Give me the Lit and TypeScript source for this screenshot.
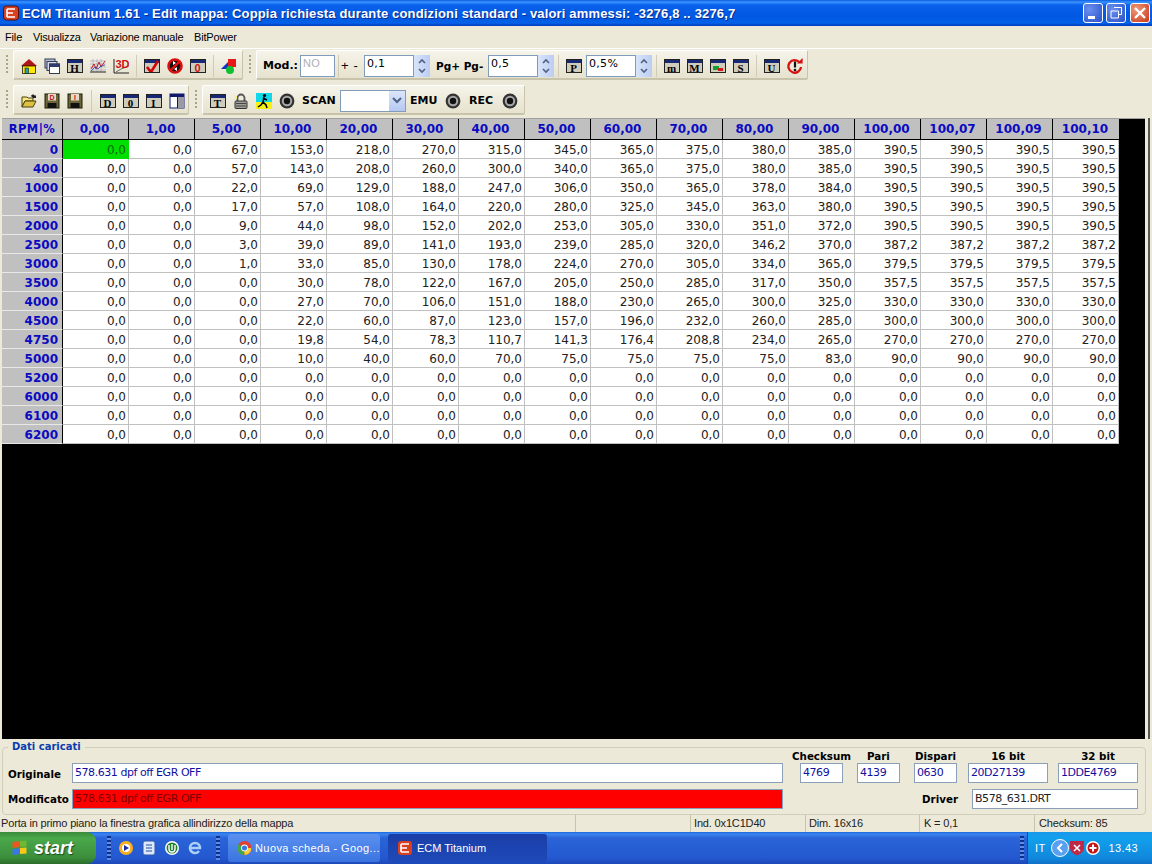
import { LitElement, html, css, svg } from "lit";
import { customElement } from "lit/decorators.js";

const Z = "0,0";
const rows: [string, string[]][] = [
  ["0", "67,0 153,0 218,0 270,0 315,0 345,0 365,0 375,0 380,0 385,0 390,5 390,5 390,5 390,5"],
  ["400", "57,0 143,0 208,0 260,0 300,0 340,0 365,0 375,0 380,0 385,0 390,5 390,5 390,5 390,5"],
  ["1000", "22,0 69,0 129,0 188,0 247,0 306,0 350,0 365,0 378,0 384,0 390,5 390,5 390,5 390,5"],
  ["1500", "17,0 57,0 108,0 164,0 220,0 280,0 325,0 345,0 363,0 380,0 390,5 390,5 390,5 390,5"],
  ["2000", "9,0 44,0 98,0 152,0 202,0 253,0 305,0 330,0 351,0 372,0 390,5 390,5 390,5 390,5"],
  ["2500", "3,0 39,0 89,0 141,0 193,0 239,0 285,0 320,0 346,2 370,0 387,2 387,2 387,2 387,2"],
  ["3000", "1,0 33,0 85,0 130,0 178,0 224,0 270,0 305,0 334,0 365,0 379,5 379,5 379,5 379,5"],
  ["3500", "0,0 30,0 78,0 122,0 167,0 205,0 250,0 285,0 317,0 350,0 357,5 357,5 357,5 357,5"],
  ["4000", "0,0 27,0 70,0 106,0 151,0 188,0 230,0 265,0 300,0 325,0 330,0 330,0 330,0 330,0"],
  ["4500", "0,0 22,0 60,0 87,0 123,0 157,0 196,0 232,0 260,0 285,0 300,0 300,0 300,0 300,0"],
  ["4750", "0,0 19,8 54,0 78,3 110,7 141,3 176,4 208,8 234,0 265,0 270,0 270,0 270,0 270,0"],
  ["5000", "0,0 10,0 40,0 60,0 70,0 75,0 75,0 75,0 75,0 83,0 90,0 90,0 90,0 90,0"],
  ["5200", ""], ["6000", ""], ["6100", ""], ["6200", ""],
].map(([k, v]) => [k, [Z, Z, ...(v ? v.split(" ") : Array(14).fill(Z))]] as [string, string[]]);

const cols = ["0,00","1,00","5,00","10,00","20,00","30,00","40,00","50,00","60,00","70,00","80,00","90,00","100,00","100,07","100,09","100,10"];

const ic = (c: unknown) => html`<svg class="ic" viewBox="0 0 16 16" width="16" height="16">${c}</svg>`;
const home = ic(svg`<path d="M0 8 8 1l8 7z" fill="#b01818"/><rect x="1.5" y="8" width="13" height="7.5" fill="#ffe800" stroke="#000" stroke-width=".7"/><rect x="4" y="10" width="3.5" height="5.5" fill="#18a0c0" stroke="#000" stroke-width=".5"/>`);
const wins = ic(svg`<g fill="#fff" stroke="#333b55"><rect x="1" y="1" width="10" height="9" fill="#b8c0d8"/><rect x="3" y="3.5" width="10" height="9" fill="#d8dce8"/><rect x="5.5" y="6" width="10" height="9.5"/><rect x="5.500" y="6" width="10" height="2.5" fill="#2a3a80"/></g>`);
const chart = ic(svg`<path d="M0 3h16M0 6h16M0 9h16M0 12h16M3 1v13M7 1v13M11 1v13" stroke="#9a9ab8" stroke-width=".6"/><path d="M0 14h16" stroke="#222"/><path d="m1 11 3-5 2 5 3-7 2 5 4-6" stroke="#c02020" fill="none"/><path d="m1 13 4-4 3 2 3-3 4-1" stroke="#2030c0" fill="none" stroke-width=".7"/>`);
const three = ic(svg`<path d="M1 1v14h15" stroke="#222" fill="none"/><path d="m3 14 5-3 8-3" stroke="#333" fill="none" stroke-width=".7"/><text x="2.5" y="10" font-family="Liberation Sans" font-weight="700" font-size="11" fill="#d01010">3D</text>`);
const check = html`<span class="win"><i></i><b></b><svg class="over" viewBox="0 0 16 16" width="16" height="16"><path d="m3 8 4 5 7-11" stroke="#d80000" stroke-width="2.6" fill="none"/></svg></span>`;
const noIc = ic(svg`<circle cx="8" cy="8" r="6.500" fill="#111" stroke="#d81010" stroke-width="2.600"/><path d="m6 3 3 2-3 2zM10 13l-3-2 3-2z" fill="#fff"/><path d="M3 13 13 3" stroke="#e81010" stroke-width="2.400"/>`);
const shapes = ic(svg`<rect x="7" y="1" width="8" height="8" fill="#e81818"/><path d="M0 11 7 4v7z" fill="#1030c8"/><circle cx="9" cy="12" r="4" fill="#10c030"/>`);
const folder = ic(svg`<path d="M1 4h5l1 1h5v3H4L1 14z" fill="#f8e880" stroke="#4a4010"/><path d="M4 8h11l-3 6H1z" fill="#e0c040" stroke="#4a4010"/><path d="M10 3c1-2 3-2 4 0l1-1v3h-3z" fill="#222"/>`);
const save = (l: string) => ic(svg`<rect x="1" y="1" width="14" height="14" fill="#6a6638" stroke="#1c1a08"/><rect x="4" y="1" width="8" height="6.5" fill="#e8d8c8"/><rect x="3.5" y="10" width="9" height="5" fill="#111"/><text x="8" y="7" text-anchor="middle" font-family="Liberation Sans" font-weight="700" font-size="7" fill="#c01818">${l}</text>`);
const panel = ic(svg`<rect x="1" y="1" width="14" height="14" fill="#fff" stroke="#101870"/><rect x="1" y="1" width="14" height="3" fill="#101870"/><rect x="9" y="4" width="6" height="11" fill="#9a9aa4"/><path d="M8.500 4v11" stroke="#101870"/>`);
const lock = ic(svg`<path d="M4.500 8V5a3.500 3.500 0 0 1 7 0v3" fill="none" stroke="#555" stroke-width="1.800"/><path d="M2 3h2v3H2z" fill="#f4f080"/><rect x="2" y="8" width="12" height="7.500" rx="1" fill="#a0a098" stroke="#333"/><path d="M3 10.500h10M3 13h10" stroke="#444"/>`);
const run = ic(svg`<rect width="16" height="9" fill="#10d8e8"/><rect y="9" width="16" height="7" fill="#f8f010"/><circle cx="8.500" cy="2.500" r="1.600"/><path d="m8 4-1 5 3 3 1 3M7 9l-2 3-3 2M7 5l4 2" stroke="#000" stroke-width="1.500" fill="none"/>`);
const disc = ic(svg`<circle cx="8" cy="8" r="7.400" fill="#333"/><circle cx="8" cy="8" r="5.200" fill="#a8a8a8"/><circle cx="8" cy="8" r="3.200" fill="#111"/>`);
const colorWin = html`<span class="win"><i></i><b></b><svg class="over" viewBox="0 0 16 16" width="16" height="16"><rect x="3" y="7" width="6" height="4" fill="#10a030"/><rect x="8" y="9" width="5" height="3" fill="#d81818"/></svg></span>`;
const redo = ic(svg`<path d="M12.600 4.400A6.300 6.300 0 1 0 14 9" fill="none" stroke="#d81010" stroke-width="2.300"/><path d="M10 5.500h5.600V0z" fill="#d81010"/><path d="M8 3.500v6" stroke="#111" stroke-width="2.200"/><circle cx="8" cy="12" r="1.300" fill="#111"/>`);
const win = (l: string, red = false) => html`<span class="win"><i></i><b class=${red ? "red" : ""}>${l}</b></span>`;
const slot = (c: unknown) => html`<span class="slot">${c}</span>`;
const spin = html`<span class="spin"><svg viewBox="0 0 16 22" width="16" height="22"><path d="m5 8 3-3 3 3" fill="none" stroke="#4d6185" stroke-width="1.600"/><path d="m5 14 3 3 3-3" fill="none" stroke="#4d6185" stroke-width="1.600"/></svg></span>`;
const flag = svg`<g transform="skewY(-6)"><rect x="1" y="3" width="6.500" height="6" fill="#e85820"/><rect x="8.500" y="3" width="6.500" height="6" fill="#70b830"/><rect x="1" y="10" width="6.500" height="6" fill="#3878e0"/><rect x="8.500" y="10" width="6.500" height="6" fill="#f8c818"/></g>`;
const chrome = svg`<circle cx="8" cy="8" r="7.500" fill="#e04030"/><path d="M8 8 1.500 4A7.500 7.500 0 0 0 8 15.500z" fill="#40a848"/><path d="M8 8h7.300A7.500 7.500 0 0 1 8 15.500z" fill="#f8d030"/><circle cx="8" cy="8" r="3.600" fill="#fff"/><circle cx="8" cy="8" r="2.700" fill="#3878e0"/>`;

@customElement("app-root")
export class AppRoot extends LitElement {
  static styles = css`
    :host { display: flex; flex-direction: column; width: 1152px; height: 864px; overflow: hidden; background: #ece9d8; font-family: "Liberation Sans", sans-serif; font-size: 11px; color: #000; }
    .title { height: 26px; flex: none; display: flex; align-items: center; padding: 0 2px 0 3px; background: linear-gradient(#0a5ae0 0, #3a93ff 2px, #0a62ec 5px, #0058e2 17px, #0462e8 23px, #003cc0 26px); color: #fff; box-sizing: border-box; }
    .title .logo { flex: none; margin-right: 3px; }
    .title .txt { flex: 1; font: 700 13px "Liberation Sans", sans-serif; letter-spacing: .16px; white-space: nowrap; text-shadow: 1px 1px #0a2a90; }
    .wb { width: 20px; height: 20px; margin-left: 3px; border: 1px solid #fff; border-radius: 3px; box-sizing: border-box; background: radial-gradient(circle at 30% 30%, #6a90f0, #2a50c8); display: flex; }
    .wb svg { display: block; }
    .wb.close { background: radial-gradient(circle at 30% 30%, #f09878, #c83818); margin-left: 4px; }
    .menu { height: 22px; flex: none; display: flex; align-items: center; padding-left: 5px; gap: 12px; font-size: 11px; letter-spacing: -.16px; white-space: nowrap; }
    .menu span:nth-child(1) { width: 16px; }
    .menu span:nth-child(2) { width: 45px; }
    .menu span:nth-child(3) { width: 92px; }
    .tools { height: 70px; flex: none; display: flex; flex-direction: column; gap: 5px; padding-top: 1px; box-sizing: border-box; border-top: 1px solid #fff; }
    .tr { display: flex; height: 30px; }
    .grip { width: 13px; flex: none; display: flex; justify-content: center; }
    .grip::before { content: ""; width: 2px; margin: 5px 0; background: repeating-linear-gradient(#a8a48c 0 2px, transparent 2px 4px); }
    .band { display: flex; align-items: center; box-sizing: border-box; height: 30px; padding-top: 2px; border: 1px solid #fff; border-right-color: #c8c4ac; border-bottom: 2px solid #c8c4ac; background: linear-gradient(#f6f4ea, #e6e2ce); border-radius: 2px; }
    .pl4 { padding-left: 3px; }
    .pl7 { padding-left: 6px; padding-right: 1px; }
    .pr2 { padding-right: 2px; }
    .pr3 { padding-right: 3px; }
    .slot { width: 23px; flex: none; display: flex; justify-content: center; }
    .ic { display: block; }
    .sep { flex: none; width: 8px; height: 22px; display: flex; justify-content: center; }
    .sep::before { content: ""; width: 1px; background: #cfcbb6; }
    .sep.w10 { width: 10px; }
    .sep.w6 { width: 6px; }
    .win { position: relative; display: block; width: 16px; height: 14px; border: 1px solid #222; box-sizing: border-box; background: #cfccbc; overflow: hidden; }
    .win i { display: block; height: 3px; background: #182878; }
    .win b { display: block; font: 700 11px/10px "Liberation Serif", serif; text-align: center; color: #000; }
    .win b.red { color: #d01010; font-family: "Liberation Sans", sans-serif; }
    .over { position: absolute; left: -1px; top: -1px; }
    .lb { flex: none; font: 700 11px "DejaVu Sans", sans-serif; white-space: nowrap; }
    .lb.mod { width: 37px; }
    .lb.pm { width: 23px; font-weight: 400; font-family: "Liberation Sans", sans-serif; font-size: 13px; letter-spacing: .6px; }
    .lb.pg { width: 52px; margin-left: 6px; font-size: 10.5px; }
    .lb.scan { width: 38px; margin-left: 4px; }
    .lb.emu { width: 31px; margin-left: 4px; }
    .lb.rec { width: 29px; margin-left: 5px; }
    .in { flex: none; box-sizing: border-box; height: 22px; width: 50px; background: #fff; border: 1px solid #7f9db9; padding: 0 2px 5px; display: flex; align-items: center; font: 11px "DejaVu Sans", sans-serif; letter-spacing: .3px; }
    .in.no { width: 35px; color: #b0b0b0; font-family: "Liberation Sans", sans-serif; }
    .in.pc { margin-left: 1px; }
    .spin { flex: none; width: 16px; height: 22px; background: linear-gradient(90deg, #d8e4fa, #bccdf2); }
    .spin svg { display: block; }
    .select { flex: none; width: 66px; height: 22px; box-sizing: border-box; border: 1px solid #7f9db9; background: #fff; display: flex; justify-content: flex-end; }
    .select span { width: 16px; background: linear-gradient(#dbe6fb, #b5c8f2); display: flex; align-items: center; justify-content: center; }
    .main { height: 621px; flex: none; display: flex; }
    .canvas { width: 1143px; margin-left: 2px; background: #000; border-top: 1px solid #a0a0a0; }
    .gutter { flex: 1; display: flex; justify-content: center; }
    .gutter::before { content: ""; width: 2px; background: #555; }
    .grid { display: grid; grid-template-columns: 61px repeat(16, 66px); grid-template-rows: 21px repeat(16, 19px); width: 1117px; font: 12px "DejaVu Sans", sans-serif; }
    .h { background: #c0c0c0; color: #0a0ac0; font-weight: 700; text-align: center; font-size: 12px; line-height: 19px; border-right: 1px solid #000; border-bottom: 1px solid #000; box-sizing: border-box; padding: 1px 2px 0 0; }
    .h:nth-child(17) { border-right: 0; }
    .h.corner { letter-spacing: .4px; font-size: 11.5px; padding-right: 0; }
    .r { background: #c0c0c0; color: #0a0ac0; font-weight: 700; text-align: right; padding: 1px 4px 0 0; box-sizing: border-box; line-height: 19px; overflow: hidden; border-right: 1px solid #000; border-bottom: 1px solid #e8e8e8; }
    .c { background: #fff; color: #222; text-align: right; padding: 1px 2px 0 0; box-sizing: border-box; line-height: 19px; overflow: hidden; border-right: 1px solid #c0c0c0; border-bottom: 1px solid #c0c0c0; font-size: 12px; }
    .c.on { background: #00e000; border-color: #00e000; color: #0a6a0a; }
    fieldset { margin: 0 6px 0 2px; padding: 0 0 0 5px; border: 1px solid #d0cdb8; border-radius: 4px; height: 76px; box-sizing: border-box; min-width: 0; }
    legend { margin-left: 0; padding: 0 4px; color: #0a3cb0; font: 700 10px/16px "DejaVu Sans", sans-serif; }
    .data { display: grid; margin-top: -6px; grid-template-columns: 64px 711px 17px 43px 14px 43px 14px 43px 11px 80px 10px 80px; grid-template-rows: 14px 20px 6px 20px; align-items: center; }
    .dl { font: 700 10.300px "DejaVu Sans", sans-serif; white-space: nowrap; }
    .dl.t2 { padding-top: 1px; }
    .top { justify-self: center; grid-row: 1; }
    .t2 { grid-row: 2; }
    .t4 { grid-row: 4; }
    .box { box-sizing: border-box; height: 20px; background: #fff; border: 1px solid #8aa0b8; padding: 0 2px 2px; display: flex; align-items: center; color: #1010a0; font: 11px "DejaVu Sans", sans-serif; letter-spacing: -.45px; white-space: nowrap; }
    .box.red { background: #ff0000; color: #800000; }
    .box.w { color: #222; }
    .c2 { grid-column: 2; } .c4 { grid-column: 4; } .c6 { grid-column: 6; } .c8 { grid-column: 8; } .c10 { grid-column: 10; } .c12 { grid-column: 12; }
    .drv { grid-column: 4 / 13; display: flex; justify-content: flex-end; align-items: center; gap: 14px; }
    .drv .box { width: 166px; }
    .status { height: 17px; flex: none; display: flex; font-size: 11px; line-height: 17px; letter-spacing: -.16px; color: #222; white-space: nowrap; }
    .status span { box-sizing: border-box; padding-left: 1px; border-right: 1px solid #c8c4ac; height: 17px; }
    .status span:nth-child(1) { width: 576px; }
    .status span:nth-child(2) { width: 115px; }
    .status span:nth-child(3) { width: 115px; padding-left: 3px; }
    .status span:nth-child(4) { width: 114px; padding-left: 3px; }
    .status span:nth-child(5) { width: 115px; padding-left: 4px; }
    .status span:nth-child(6) { border: 0; padding-left: 4px; }
    .task { height: 32px; flex: none; display: flex; align-items: center; background: linear-gradient(#1c66e0 0, #3c86f0 2px, #2a64d8 6px, #2458d0 26px, #1c48b8 32px); color: #fff; font-size: 11px; letter-spacing: .4px; }
    .start { width: 96px; height: 32px; flex: none; box-sizing: border-box; display: flex; align-items: center; gap: 6px; padding-left: 11px; border-radius: 0 9px 9px 0; background: linear-gradient(#3a8a3c, #4aa84a 20%, #3c8e3c 80%, #2c6c2c); font: italic 700 18px "Liberation Sans", sans-serif; letter-spacing: 0; text-shadow: 1px 1px 1px #1c4c1c; }
    .dots { width: 4px; height: 24px; flex: none; background: repeating-linear-gradient(#0e2f8c 0 2px, #5c8ce8 2px 4px); }
    .d1 { margin-left: 11px; }
    .d2 { margin-left: 13px; }
    .ql { display: flex; align-items: center; gap: 7px; margin-left: 7px; }
    .ql svg { display: block; }
    .tb { box-sizing: border-box; height: 28px; flex: none; display: flex; align-items: center; gap: 3px; padding-left: 9px; border-radius: 3px; white-space: nowrap; }
    .tb.a { width: 152px; margin-left: 8px; background: linear-gradient(#5a90f0, #3c74e0); }
    .tb.b { width: 159px; margin-left: 8px; gap: 4px; background: linear-gradient(#1a3ea8, #1e4ab8); letter-spacing: 0; }
    .tray { margin-left: auto; width: 125px; height: 32px; box-sizing: border-box; display: flex; align-items: center; background: linear-gradient(#1898e8, #12a0ec 6px, #1088dc 26px, #1070c8); border-left: 1px solid #0a4ea8; }
    .tray svg { display: block; }
    .tray .it { margin: 0 5px 0 2px; width: 11px; }
    .tray .ti { margin-left: auto; margin-right: 14px; }
    .lead { margin-left: -8px; margin-right: 9px; }
  `;

  render() {
    return html`
      <div class="title">
        <svg class="logo" viewBox="0 0 16 16" width="16" height="16"><rect x=".5" y="1" width="15" height="14" rx="3" fill="#d84020" stroke="#5a1008"/><path d="M4 4h8M4 8h6M4 12h8M4 4v8" stroke="#fff" stroke-width="1.600" fill="none"/></svg>
        <span class="txt">ECM Titanium 1.61 - Edit mappa: Coppia richiesta durante condizioni standard - valori ammessi: -3276,8 .. 3276,7</span>
        <span class="wb"><svg viewBox="0 0 18 18" width="18" height="18"><rect x="4" y="12" width="7" height="3" fill="#fff"/></svg></span>
        <span class="wb"><svg viewBox="0 0 18 18" width="18" height="18"><path d="M7 3.500h7.500v7H12M4 7h7.500v7H4z" fill="none" stroke="#fff"/></svg></span>
        <span class="wb close"><svg viewBox="0 0 18 18" width="18" height="18"><path d="m4 4 10 10M14 4 4 14" stroke="#fff" stroke-width="2.400"/></svg></span>
      </div>
      <div class="menu"><span>File</span><span>Visualizza</span><span>Variazione manuale</span><span>BitPower</span></div>
      <div class="tools">
        <div class="tr">
          <span class="grip"></span>
          <div class="band pl4 pr2">
            ${slot(home)}${slot(wins)}${slot(win("H"))}${slot(chart)}${slot(three)}<span class="sep"></span>
            ${slot(check)}${slot(noIc)}${slot(win("0", true))}<span class="sep"></span>${slot(shapes)}
          </div>
          <span class="grip"></span>
          <div class="band pl7">
            <span class="lb mod">Mod.:</span><span class="in no">NO</span><span class="sep w6"></span>
            <span class="lb pm">+ -</span><span class="in">0,1</span>${spin}
            <span class="lb pg">Pg+ Pg-</span><span class="in">0,5</span>${spin}<span class="sep"></span>
            ${slot(win("P"))}<span class="in pc">0,5%</span>${spin}<span class="sep"></span>
            ${slot(win("m"))}${slot(win("M"))}${slot(colorWin)}${slot(win("S"))}<span class="sep"></span>
            ${slot(win("U"))}${slot(redo)}
          </div>
        </div>
        <div class="tr">
          <span class="grip"></span>
          <div class="band pl4">
            ${slot(folder)}${slot(save("D"))}${slot(save("I"))}<span class="sep w10"></span>
            ${slot(win("D"))}${slot(win("0"))}${slot(win("I"))}${slot(panel)}
          </div>
          <span class="grip"></span>
          <div class="band pl4 pr3">
            ${slot(win("T"))}${slot(lock)}${slot(run)}${slot(disc)}
            <span class="lb scan">SCAN</span>
            <span class="select"><span><svg viewBox="0 0 10 8" width="10" height="8"><path d="m1 1 4 4 4-4" fill="none" stroke="#4d6185" stroke-width="2"/></svg></span></span>
            <span class="lb emu">EMU</span>${slot(disc)}
            <span class="lb rec">REC</span>${slot(disc)}
          </div>
        </div>
      </div>
      <div class="main">
        <div class="canvas">
          <div class="grid">
            <div class="h corner">RPM|%</div>
            ${cols.map((c) => html`<div class="h">${c}</div>`)}
            ${rows.map(([k, vals], i) => html`<div class="r">${k}</div>${vals.map((v, j) => html`<div class="c ${i === 0 && j === 0 ? "on" : ""}">${v}</div>`)}`)}
          </div>
        </div>
        <div class="gutter"></div>
      </div>
      <fieldset>
        <legend>Dati caricati</legend>
        <div class="data">
          <span class="dl top c4">Checksum</span><span class="dl top c6">Pari</span><span class="dl top c8">Dispari</span><span class="dl top c10">16 bit</span><span class="dl top c12">32 bit</span>
          <span class="dl t2">Originale</span><span class="box t2 c2">578.631 dpf off EGR OFF</span>
          <span class="box t2 c4">4769</span><span class="box t2 c6">4139</span><span class="box t2 c8">0630</span><span class="box t2 c10">20D27139</span><span class="box t2 c12">1DDE4769</span>
          <span class="dl t4">Modificato</span><span class="box red t4 c2">578.631 dpf off EGR OFF</span>
          <div class="drv t4"><span class="dl">Driver</span><span class="box w">B578_631.DRT</span></div>
        </div>
      </fieldset>
      <div class="status"><span>Porta in primo piano la finestra grafica allindirizzo della mappa</span><span></span><span>Ind. 0x1C1D40</span><span>Dim. 16x16</span><span>K = 0,1</span><span>Checksum: 85</span></div>
      <div class="task">
        <div class="start"><svg viewBox="0 0 16 18" width="17" height="18">${flag}</svg>start</div>
        <span class="dots d1"></span>
        <div class="ql">
          <svg viewBox="0 0 16 16" width="16" height="16"><circle cx="8" cy="8" r="7" fill="#f8b020"/><circle cx="8" cy="8" r="4" fill="#fff"/><path d="m6 5 5 3-5 3z" fill="#2030a0"/></svg>
          <svg viewBox="0 0 16 16" width="16" height="16"><rect x="2" y="1" width="12" height="14" rx="2" fill="#dfe8f8" stroke="#3058a8"/><path d="M5 5h6M5 8h6M5 11h6" stroke="#2050b0"/></svg>
          <svg viewBox="0 0 16 16" width="16" height="16"><circle cx="8" cy="8" r="7" fill="#fff"/><circle cx="8" cy="8" r="5.500" fill="#208030"/><path d="M5 5v4a3 3 0 0 0 6 0V5M8 4v6" stroke="#fff" stroke-width="1.400" fill="none"/></svg>
          <svg viewBox="0 0 16 16" width="16" height="16"><path d="M3 8a5 5 0 0 1 10 0H3zm0 0a5 5 0 0 0 9 3" fill="none" stroke="#a8d0f8" stroke-width="2.400"/></svg>
        </div>
        <span class="dots d2"></span>
        <div class="tb a"><svg viewBox="0 0 16 16" width="16" height="16">${chrome}</svg>Nuova scheda - Goog...</div>
        <div class="tb b"><svg viewBox="0 0 16 16" width="16" height="16"><rect x="1" y="1" width="14" height="14" rx="3" fill="#d84020"/><path d="M4 4h8M4 8h6M4 12h8M4 4v8" stroke="#fff" stroke-width="1.600" fill="none"/></svg>ECM Titanium</div>
        <div class="tray">
          <span class="dots lead"></span>
          <span class="it">IT</span>
          <svg viewBox="0 0 18 18" width="18" height="18"><circle cx="9" cy="9" r="8.500" fill="#5aa0f0" stroke="#fff"/><path d="M11 5 7 9l4 4" stroke="#fff" stroke-width="2" fill="none"/></svg>
          <svg viewBox="0 0 16 16" width="16" height="16"><path d="M1 1h14v7c0 4-4 6-7 7.500C5 14 1 12 1 8z" fill="#c02848"/><path d="m5 5 6 6m0-6-6 6" stroke="#fff" stroke-width="1.500"/></svg>
          <svg viewBox="0 0 16 16" width="16" height="16"><circle cx="8" cy="8" r="7" fill="#fff"/><circle cx="8" cy="8" r="5.500" fill="#c01818"/><path d="M8 4.500v7M4.500 8h7" stroke="#fff" stroke-width="2"/></svg>
          <span class="ti">13.43</span>
        </div>
      </div>
    `;
  }
}
